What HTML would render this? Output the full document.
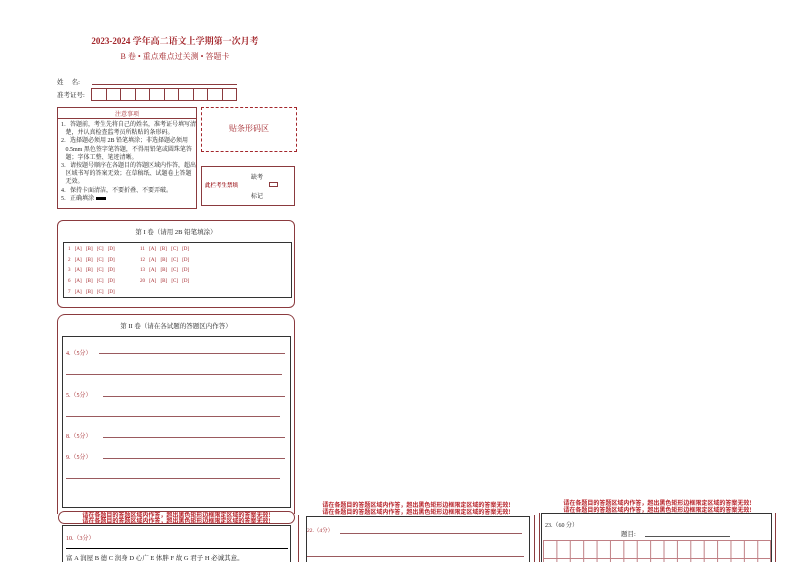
<!DOCTYPE html>
<html style="width:794px;height:562px;overflow:hidden"><head><meta charset="utf-8"><style>
*{margin:0;padding:0;box-sizing:border-box}
body{width:794px;height:562px;background:#fff;position:relative;overflow:hidden;font-family:"Liberation Serif","Noto Serif CJK SC","Noto Sans CJK SC",serif;color:#222}
.a{position:absolute;white-space:nowrap}
.r{color:#a3262b}
.b{position:absolute;border:1px solid #8b3a3e}
.k{position:absolute;border:1px solid #333}
.ln{position:absolute;height:1px;background:#9a5a5e}
.t{font-size:6px;line-height:8.2px}
.ans{font-size:5px;color:#a3262b;word-spacing:3px}
.ban{font-size:6px;line-height:6px;color:#b8232a;text-align:center;font-family:"Noto Sans CJK SC",sans-serif;font-weight:bold}
</style></head><body>
<div class="a r" style="left:0;width:350px;text-align:center;top:34px;font-size:9px;font-weight:bold">2023-2024 学年高二语文上学期第一次月考</div>
<div class="a r" style="left:0;width:350px;text-align:center;top:51px;font-size:8px">B 卷 • 重点难点过关测 • 答题卡</div>
<div class="a" style="left:57px;top:77px;font-size:6.5px">姓&nbsp;&nbsp;&nbsp;&nbsp;&nbsp;名:</div>
<div class="ln" style="left:92px;top:84px;width:145px;background:#8b3a3e"></div>
<div class="a" style="left:57px;top:90px;font-size:6.5px">准考证号:</div>
<div style="position:absolute;left:91px;top:88px;display:flex">
<div style="width:15.5px;height:13px;border:1px solid #8b3a3e;margin-right:-1px"></div><div style="width:15.5px;height:13px;border:1px solid #8b3a3e;margin-right:-1px"></div><div style="width:15.5px;height:13px;border:1px solid #8b3a3e;margin-right:-1px"></div><div style="width:15.5px;height:13px;border:1px solid #8b3a3e;margin-right:-1px"></div><div style="width:15.5px;height:13px;border:1px solid #8b3a3e;margin-right:-1px"></div><div style="width:15.5px;height:13px;border:1px solid #8b3a3e;margin-right:-1px"></div><div style="width:15.5px;height:13px;border:1px solid #8b3a3e;margin-right:-1px"></div><div style="width:15.5px;height:13px;border:1px solid #8b3a3e;margin-right:-1px"></div><div style="width:15.5px;height:13px;border:1px solid #8b3a3e;margin-right:-1px"></div><div style="width:15.5px;height:13px;border:1px solid #8b3a3e;margin-right:-1px"></div></div>
<div class="b" style="left:57px;top:107px;width:140px;height:102px"></div>
<div class="ln" style="left:57px;top:118px;width:140px;background:#8b3a3e"></div>
<div class="a r" style="left:57px;width:140px;text-align:center;top:109px;font-size:6px">注意事项</div>
<div class="a t" style="left:61px;top:121px">1．答题前，考生先将自己的姓名，准考证号填写清<br>&nbsp;&nbsp;&nbsp;楚，并认真检查监考员所粘贴的条形码。<br>2．选择题必须用 2B 铅笔填涂；非选择题必须用<br>&nbsp;&nbsp;&nbsp;0.5mm 黑色签字笔答题，不得用铅笔或圆珠笔答<br>&nbsp;&nbsp;&nbsp;题；字体工整、笔迹清晰。<br>3．请按题号顺序在各题目的答题区域内作答，超出<br>&nbsp;&nbsp;&nbsp;区域书写的答案无效；在草稿纸、试题卷上答题<br>&nbsp;&nbsp;&nbsp;无效。<br>4．保持卡面清洁，不要折叠、不要弄破。<br>5．正确填涂 <span style="display:inline-block;width:10px;height:3px;background:#000;vertical-align:middle"></span></div>
<div style="position:absolute;left:201px;top:107px;width:96px;height:45px;border:1px dashed #a3262b"></div>
<div class="a r" style="left:201px;width:96px;text-align:center;top:123px;font-size:8px">贴条形码区</div>
<div class="b" style="left:201px;top:166px;width:94px;height:40px"></div>
<div class="a" style="left:251px;top:172px;font-size:6px">缺考</div>
<div class="a r" style="left:205px;top:181px;font-size:5.5px;font-weight:bold">此栏考生禁填</div>
<div class="b" style="left:269px;top:182px;width:9px;height:5px"></div>
<div class="a" style="left:251px;top:191px;font-size:6px">标记</div>

<div class="b" style="left:57px;top:220px;width:238px;height:88px;border-radius:6px"></div>
<div class="a" style="left:57px;width:238px;text-align:center;top:227px;font-size:6.5px">第 I 卷（请用 2B 铅笔填涂）</div>
<div class="k" style="left:63px;top:242px;width:229px;height:56px"></div>
<div class="a ans" style="left:68px;top:245px;line-height:10.7px">1 [A] [B] [C] [D]<br>2 [A] [B] [C] [D]<br>3 [A] [B] [C] [D]<br>6 [A] [B] [C] [D]<br>7 [A] [B] [C] [D]</div>
<div class="a ans" style="left:140px;top:245px;line-height:10.7px">11 [A] [B] [C] [D]<br>12 [A] [B] [C] [D]<br>13 [A] [B] [C] [D]<br>20 [A] [B] [C] [D]</div>

<div class="b" style="left:57px;top:314px;width:238px;height:200px;border-radius:8px 8px 0 0;border-bottom:none"></div>
<div class="a" style="left:57px;width:238px;text-align:center;top:321px;font-size:6.5px">第 II 卷（请在各试题的答题区内作答）</div>
<div class="k" style="left:62px;top:336px;width:229px;height:172px"></div>
<div class="a r" style="left:66px;top:348px;font-size:6px">4.（5分）</div><div class="ln" style="left:99px;top:353px;width:186px"></div>
<div class="ln" style="left:66px;top:374px;width:216px"></div>
<div class="a r" style="left:66px;top:390px;font-size:6px">5.（5分）</div><div class="ln" style="left:103px;top:396px;width:182px"></div>
<div class="ln" style="left:66px;top:416px;width:214px"></div>
<div class="a r" style="left:66px;top:431px;font-size:6px">8.（5分）</div><div class="ln" style="left:103px;top:437px;width:182px"></div>
<div class="a r" style="left:66px;top:452px;font-size:6px">9.（5分）</div><div class="ln" style="left:103px;top:458px;width:182px"></div>
<div class="ln" style="left:66px;top:478px;width:214px"></div>
<div class="b" style="left:58px;top:511px;width:237px;height:13px;border-radius:7px"></div>
<div class="a ban" style="left:58px;width:237px;top:512px">请在各题目的答题区域内作答，超出黑色矩形边框限定区域的答案无效!<br>请在各题目的答题区域内作答，超出黑色矩形边框限定区域的答案无效!</div>
<div class="k" style="left:62px;top:525px;width:229px;height:45px"></div>
<div class="a r" style="left:66px;top:533px;font-size:6px">10.（3分）</div>
<div style="position:absolute;left:66px;top:548px;width:222px;height:1px;background:#000"></div>
<div class="a" style="left:66px;top:553px;font-size:6.5px">富 A 润屋 B 德 C 润身 D 心广 E 体胖 F 故 G 君子 H 必诚其意。</div>

<div class="b" style="left:298px;top:505px;width:237px;height:70px;border-radius:8px"></div>
<div class="a ban" style="left:298px;width:237px;top:502px;background:#fff;line-height:6.5px">请在各题目的答题区域内作答，超出黑色矩形边框限定区域的答案无效!<br>请在各题目的答题区域内作答，超出黑色矩形边框限定区域的答案无效!</div>
<div class="k" style="left:306px;top:516px;width:224px;height:55px"></div>
<div class="a r" style="left:307px;top:526px;font-size:5.5px">22.（4分）</div><div class="ln" style="left:340px;top:533px;width:182px"></div>
<div class="ln" style="left:307px;top:556px;width:217px"></div>

<div class="b" style="left:539px;top:502px;width:237px;height:70px;border-radius:8px"></div>
<div class="a ban" style="left:539px;width:237px;top:500px;background:#fff;line-height:6.5px">请在各题目的答题区域内作答，超出黑色矩形边框限定区域的答案无效!<br>请在各题目的答题区域内作答，超出黑色矩形边框限定区域的答案无效!</div>
<div class="k" style="left:541px;top:513px;width:231px;height:60px"></div>
<div class="a" style="left:545px;top:520px;font-size:6px">23.（60 分）</div>
<div class="a" style="left:621px;top:529px;font-size:6.5px">题目:</div><div class="ln" style="left:645px;top:536px;width:85px;background:#555"></div>
<div style="position:absolute;left:543px;top:540px;width:228px;height:22px;background-image:linear-gradient(to right,#c08085 1px,transparent 1px),linear-gradient(to bottom,#c08085 1px,transparent 1px);background-size:13.4px 100%,100% 18px;border-right:1px solid #c08085"></div>
<div class="ln" style="left:543px;top:558px;width:228px;background:#c08085"></div>
</body></html>
